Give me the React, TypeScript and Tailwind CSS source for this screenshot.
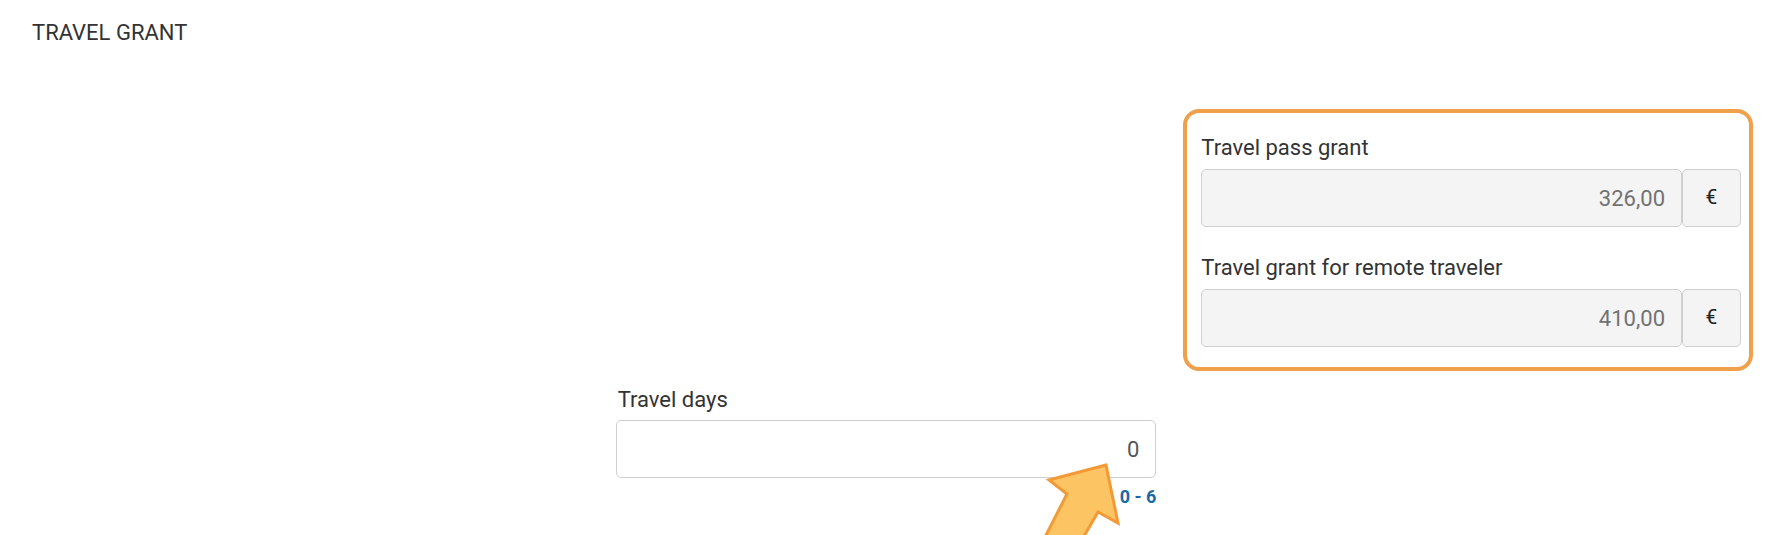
export default function App() {
  const grants = [
    { label: "Travel pass grant", value: "326,00" },
    { label: "Travel grant for remote traveler", value: "410,00" },
  ];

  return (
    <div className="relative min-h-[535px] overflow-hidden bg-white font-['Roboto','Liberation_Sans',sans-serif] text-[#333]">
      <div className="px-[30px] pt-[18px]">
        <h2 className="pl-[2px] text-[22px] leading-[30px] text-[#333]">TRAVEL GRANT</h2>

        <div className="mt-[61px] grid grid-cols-3 gap-x-[45px]">
          {/* highlighted grant fields */}
          <div className="col-start-3 -ml-[18px] -mr-[11px] rounded-[16px] border-4 border-[#f0a04a] pt-[20px] pb-[20px] pl-[14px] pr-[8px]">
            {grants.map((g, i) => (
              <div key={g.label} className={i > 0 ? "mt-[26px]" : ""}>
                <div className="mb-[6px] text-[22px] leading-[30px]">{g.label}</div>
                <div className="flex h-[58px]">
                  <div className="flex flex-1 items-center justify-end rounded-[5px] border border-[#cfcfcf] bg-[#f4f4f4] pr-4 text-[22px] text-[#727272]">
                    {g.value}
                  </div>
                  <div className="flex w-[59px] items-center justify-center rounded-[5px] border border-[#cfcfcf] bg-[#f4f4f4] text-[21px] text-[#222]">
                    €
                  </div>
                </div>
              </div>
            ))}
          </div>

          {/* travel days */}
          <div className="col-start-2 mt-[14px]">
            <div className="mb-[5px] pl-[2px] text-[22px] leading-[30px]">Travel days</div>
            <div className="flex h-[58px] items-center justify-end rounded-[5px] border border-[#cfcfcf] bg-white pr-4 text-[22px] text-[#555]">
              0
            </div>
            <div className="mt-[7px] text-right text-[18px] font-bold leading-[24px] text-[#1b6aa5]">0 - 6</div>
          </div>
        </div>
      </div>

      {/* pointer arrow */}
      <svg
        className="absolute left-[1030px] top-[455px]"
        width="100"
        height="90"
        viewBox="0 0 100 90"
      >
        <path
          d="M76 10 L19 25 L37 39 L12 88 L50 88 L68 57 L88 68 Z"
          fill="#fdc463"
          stroke="#f39a36"
          strokeWidth="3"
          strokeLinejoin="miter"
        />
      </svg>
    </div>
  );
}
